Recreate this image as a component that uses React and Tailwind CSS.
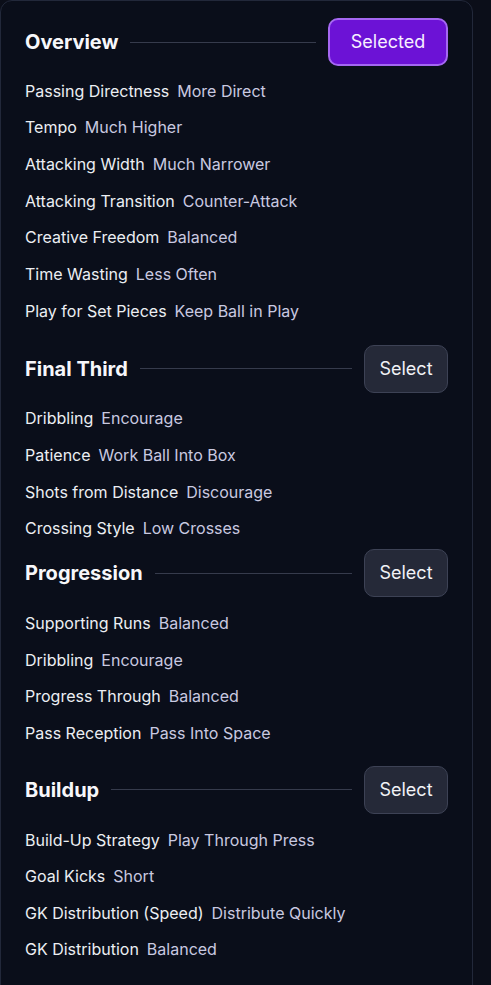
import React from 'react';

const sections = [
  {
    title: 'Overview',
    selected: true,
    mt: 'mt-0',
    rows: [
      ['Passing Directness', 'More Direct'],
      ['Tempo', 'Much Higher'],
      ['Attacking Width', 'Much Narrower'],
      ['Attacking Transition', 'Counter-Attack'],
      ['Creative Freedom', 'Balanced'],
      ['Time Wasting', 'Less Often'],
      ['Play for Set Pieces', 'Keep Ball in Play'],
    ],
  },
  {
    title: 'Final Third',
    mt: 'mt-[22px]',
    rows: [
      ['Dribbling', 'Encourage'],
      ['Patience', 'Work Ball Into Box'],
      ['Shots from Distance', 'Discourage'],
      ['Crossing Style', 'Low Crosses'],
    ],
  },
  {
    title: 'Progression',
    mt: 'mt-[9px]',
    rows: [
      ['Supporting Runs', 'Balanced'],
      ['Dribbling', 'Encourage'],
      ['Progress Through', 'Balanced'],
      ['Pass Reception', 'Pass Into Space'],
    ],
  },
  {
    title: 'Buildup',
    mt: 'mt-[21px]',
    rows: [
      ['Build-Up Strategy', 'Play Through Press'],
      ['Goal Kicks', 'Short'],
      ['GK Distribution (Speed)', 'Distribute Quickly'],
      ['GK Distribution', 'Balanced'],
    ],
  },
];

const Section = ({ section }) => (
  <div className={`flex flex-col gap-[12.67px] ${section.mt}`}>
    <div className={`flex items-center gap-3 h-12 ${section.selected ? '' : 'mb-px'}`}>
      <h3 className="text-xl font-bold text-[#f7f7fa] whitespace-nowrap">{section.title}</h3>
      <div className="flex-1 h-px bg-[#363b4c]" />
      {section.selected ? (
        <button className="w-[120px] h-12 rounded-[10px] border-2 border-[#a567f2] bg-[#6c12d6] text-lg text-[#f6f0ff]">
          Selected
        </button>
      ) : (
        <button className="w-[84px] h-12 rounded-[10px] border border-[#3d4255] bg-[#252938] text-lg text-[#f1f2f6]">
          Select
        </button>
      )}
    </div>
    {section.rows.map(([label, value], i) => (
      <div key={i} className="flex items-center gap-2 h-6 text-base">
        <span className="text-[#eceef3]">{label}</span>
        <span className="text-[#c9c9e0]">{value}</span>
      </div>
    ))}
  </div>
);

const App = () => {
  return (
    <div
      className="min-h-[985px] w-[491px] bg-[#0b0e19] overflow-hidden"
      style={{ fontFamily: 'Inter, "Noto Sans", sans-serif' }}
    >
      <div className="w-[473px] min-h-[1000px] rounded-xl border border-[#22283a] bg-[#0a0e1a] px-6 pt-[17px]">
        {sections.map((s) => (
          <Section key={s.title} section={s} />
        ))}
      </div>
    </div>
  );
};

export default App;
